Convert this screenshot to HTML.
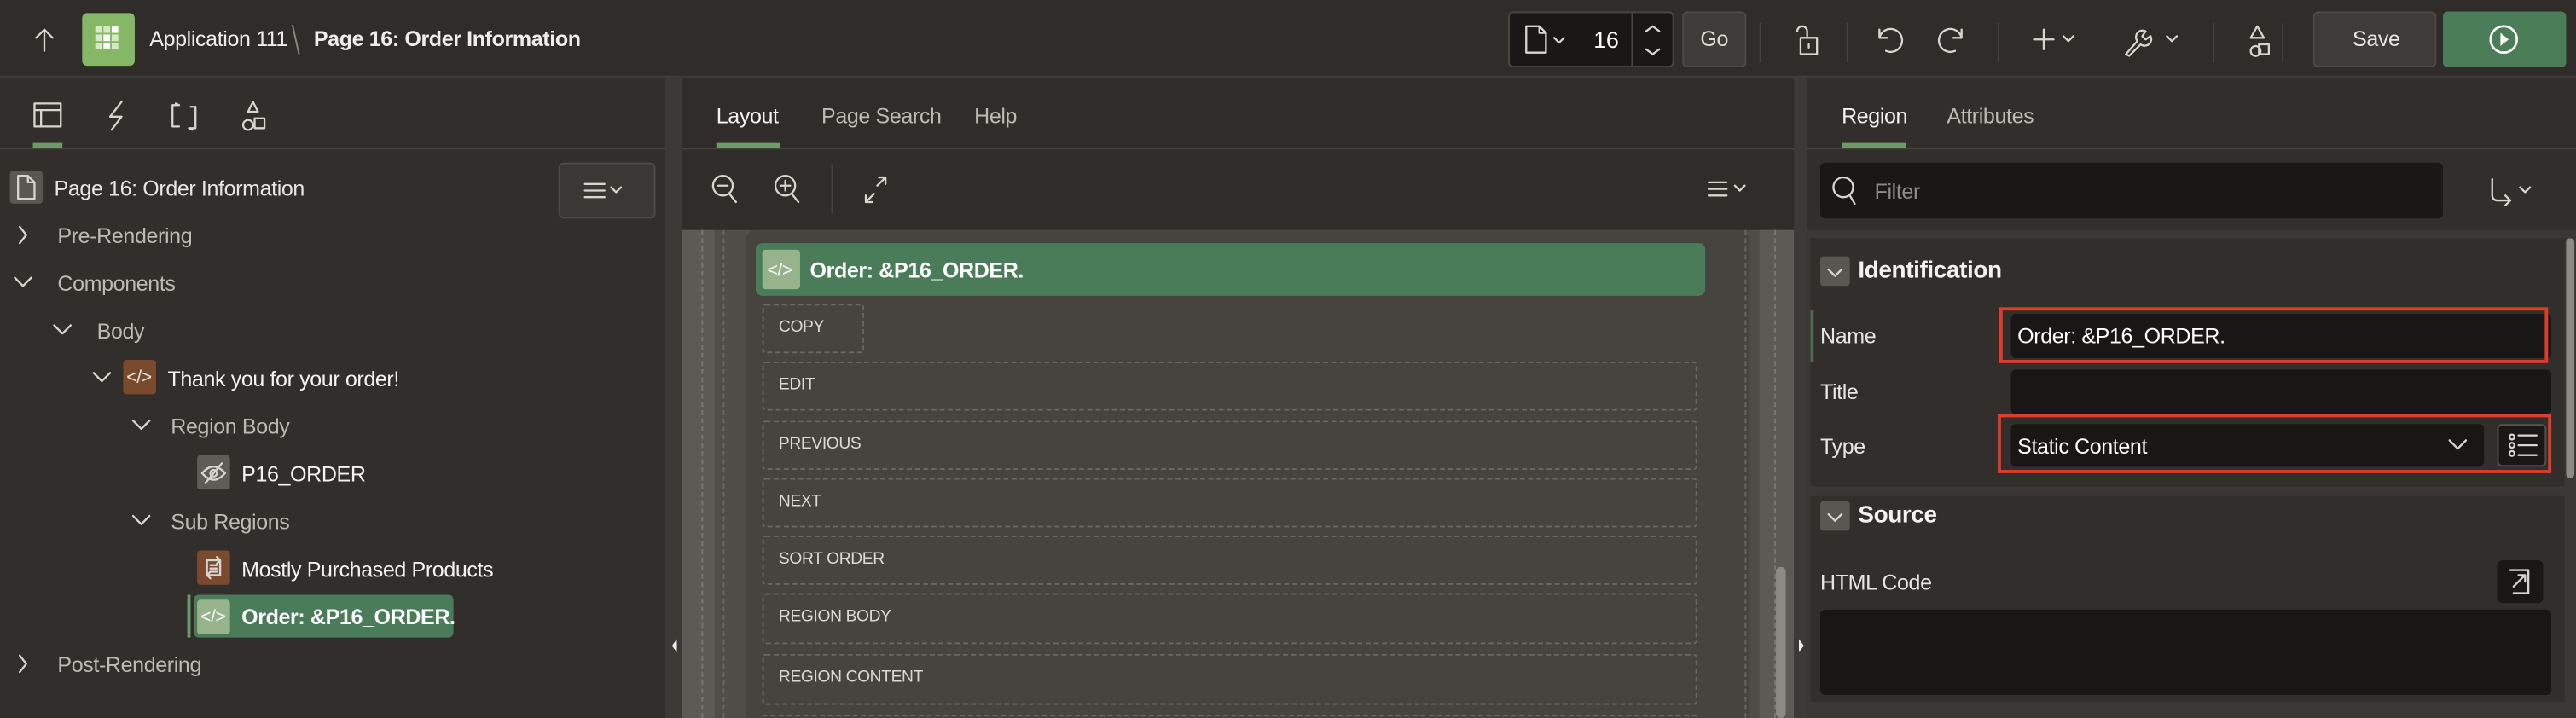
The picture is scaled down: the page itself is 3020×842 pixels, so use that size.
<!DOCTYPE html>
<html><head><meta charset="utf-8"><style>
*{box-sizing:border-box;margin:0;padding:0}
html,body{width:3020px;height:842px;overflow:hidden;background:#312e2b}
#r{position:absolute;left:0;top:0;width:1568px;height:437px;overflow:hidden;transform:scale(1.92602,1.92677);transform-origin:0 0;font-family:"Liberation Sans",sans-serif;color:#e8e6e3;font-size:13px;background:#312e2b;letter-spacing:-0.2px}
.a{position:absolute}
.t{position:absolute;white-space:nowrap;line-height:16px}
svg{position:absolute;overflow:visible}
.ic{stroke:#d8d5d0;fill:none;stroke-width:1.2;stroke-linecap:round;stroke-linejoin:round}
.btn{position:absolute;border:1px dashed #6a6661;border-radius:2px;font-size:10px;color:#dcd9d4;padding-left:9px;line-height:28px}
.lbl{font-size:13px;color:#e8e6e3}
</style></head><body><div id="r">
<div class="a" style="left:0;top:0;width:1568px;height:48px;background:#2f2c29;border-bottom:2px solid #3d3a37"></div>
<svg style="left:20px;top:16px" width="14" height="16"><path class="ic" d="M7 15V2M2 7l5-5 5 5"/></svg>
<div class="a" style="left:50px;top:8px;width:32px;height:32px;background:#86b766;border-radius:3px"></div>
<svg style="left:57px;top:15px" width="18" height="18"><g fill="#d6e8c8"><rect x="1" y="1" width="4" height="4"/><rect x="6" y="1" width="4" height="4"/><rect x="11" y="1" width="4" height="4" fill="#fff"/><rect x="1" y="6" width="4" height="4"/><rect x="6" y="6" width="4" height="4" fill="#fff"/><rect x="11" y="6" width="4" height="4"/><rect x="1" y="11" width="4" height="4"/><rect x="6" y="11" width="4" height="4" fill="#fff"/><rect x="11" y="11" width="4" height="4"/></g></svg>
<div class="t" style="left:91px;top:16px;font-size:13px;color:#f0eeeb">Application 111</div>
<svg style="left:177px;top:14px" width="6" height="20"><path d="M1 1l4 18" stroke="#8a8681" stroke-width="1"/></svg>
<div class="t" style="left:191px;top:16px;font-size:13px;font-weight:bold;color:#f0eeeb">Page 16: Order Information</div>

<div class="a" style="left:918px;top:7px;width:101px;height:34px;background:#1a1817;border:1px solid #4a4643;border-radius:3px"></div>
<div class="a" style="left:993px;top:8px;width:1px;height:32px;background:#4a4643"></div>
<svg style="left:928px;top:15px" width="30" height="18"><path class="ic" d="M1 1h8l4 4v12H1z M9 1v4h4 M18 8l3 3 3-3"/></svg>
<div class="t" style="left:970px;top:16px;font-size:14px;color:#fff">16</div>
<svg style="left:1000px;top:13px" width="12" height="22"><path class="ic" d="M2 6l4-3 4 3 M2 17l4 3 4-3" stroke="#aaa"/></svg>
<div class="a" style="left:1024px;top:7px;width:39px;height:34px;background:#3e3b38;border:1px solid #4e4a47;border-radius:3px"></div>
<div class="t" style="left:1035px;top:16px;font-size:13px;color:#e0ddd8">Go</div>
<div class="a" style="left:1071px;top:14px;width:1px;height:24px;background:#45413e"></div>
<svg style="left:1093px;top:14px" width="16" height="20"><path class="ic" d="M1 5a3 3 0 0 1 6 0v3 M3 9h10v10H3z M8 13v2"/></svg>
<div class="a" style="left:1124px;top:14px;width:1px;height:24px;background:#45413e"></div>
<svg style="left:1141px;top:15px" width="18" height="18"><path class="ic" d="M3 3v5h5 M3 8a7 7 0 1 1 4 8"/></svg>
<svg style="left:1179px;top:15px" width="18" height="18"><path class="ic" stroke="#6e6a66" d="M15 3v5h-5 M15 8a7 7 0 1 0-4 8"/></svg>
<div class="a" style="left:1216px;top:14px;width:1px;height:24px;background:#45413e"></div>
<svg style="left:1237px;top:17px" width="30" height="14"><path class="ic" d="M7 1v12M1 7h12 M19 5l3 3 3-3"/></svg>
<svg style="left:1292px;top:15px" width="36" height="20"><path class="ic" d="M2 18l7-8a4 4 0 0 1 5-6l-2 3 2 2 3-2a4 4 0 0 1-6 5l-7 7z M27 7l3 3 3-3"/></svg>
<div class="a" style="left:1347px;top:14px;width:1px;height:24px;background:#45413e"></div>
<svg style="left:1365px;top:15px" width="18" height="20"><path class="ic" d="M9 1l4 7H5z M5 16a3 3 0 1 1 0 .1 M10 12h6v6h-6z"/></svg>
<div class="a" style="left:1389px;top:14px;width:1px;height:24px;background:#45413e"></div>
<div class="a" style="left:1408px;top:7px;width:75px;height:34px;background:#3e3b38;border:1px solid #4e4a47;border-radius:3px"></div>
<div class="t" style="left:1432px;top:16px;font-size:13px;color:#e8e6e3">Save</div>
<div class="a" style="left:1487px;top:7px;width:75px;height:34px;background:#4a7d58;border-radius:3px"></div>
<svg style="left:1514px;top:14px" width="20" height="20"><circle cx="10" cy="10" r="8" stroke="#fff" stroke-width="1.4" fill="none"/><path d="M8 6l5 4-5 4z" fill="#fff"/></svg>

<div class="a" style="left:0;top:90px;width:405px;height:1px;background:#45413e"></div>
<svg style="left:20px;top:62px" width="18" height="16"><path class="ic" stroke="#fff" d="M1 1h16v14H1z M1 5h16 M5 5v10"/></svg>
<div class="a" style="left:20px;top:87px;width:18px;height:3px;background:#6c9a68"></div>
<svg style="left:64px;top:61px" width="14" height="19"><path class="ic" d="M10 1L3 10h7L4 18"/></svg>
<svg style="left:103px;top:62px" width="18" height="18"><path class="ic" d="M5 2H2v13h4 M6 2l-2-1 M13 3h3v13h-4 M12 16l2 1"/></svg>
<svg style="left:144px;top:61px" width="20" height="19"><path class="ic" d="M10 1l3 6H7z M4 15a3 3 0 1 1 0 .1 M11 11h6v6h-6z"/></svg>

<div class="a" style="left:6px;top:104px;width:20px;height:20px;background:#5a5652;border-radius:2px"></div>
<svg style="left:10px;top:106px" width="12" height="16"><path class="ic" d="M1 1h6l4 4v10H1z M7 1v4h4"/></svg>
<div class="t" style="left:33px;top:107px">Page 16: Order Information</div>
<div class="a" style="left:340px;top:99px;width:59px;height:34px;background:#3a3734;border:1px solid #4e4a47;border-radius:3px"></div>
<svg style="left:355px;top:111px" width="30" height="12"><path class="ic" d="M1 1h12M1 5h12M1 9h12 M17 3l3 3 3-3"/></svg>

<svg style="left:10px;top:137px" width="8" height="12"><path class="ic" stroke="#8a8681" d="M2 1l4 5-4 5"/></svg>
<div class="t" style="left:35px;top:136px;color:#bdb9b4">Pre-Rendering</div>
<svg style="left:8px;top:168px" width="12" height="8"><path class="ic" stroke="#8a8681" d="M1 1l5 5 5-5"/></svg>
<div class="t" style="left:35px;top:165px;color:#bdb9b4">Components</div>
<svg style="left:32px;top:197px" width="12" height="8"><path class="ic" stroke="#8a8681" d="M1 1l5 5 5-5"/></svg>
<div class="t" style="left:59px;top:194px;color:#bdb9b4">Body</div>
<svg style="left:56px;top:226px" width="12" height="8"><path class="ic" stroke="#8a8681" d="M1 1l5 5 5-5"/></svg>
<div class="a" style="left:75px;top:219px;width:20px;height:21px;background:#7a4a2e;border-radius:2px"></div>
<div class="t" style="left:77px;top:222px;font-size:11px;color:#f2e6dc">&lt;/&gt;</div>
<div class="t" style="left:102px;top:223px;color:#f5f3f0">Thank you for your order!</div>
<svg style="left:80px;top:255px" width="12" height="8"><path class="ic" stroke="#8a8681" d="M1 1l5 5 5-5"/></svg>
<div class="t" style="left:104px;top:252px;color:#bdb9b4">Region Body</div>
<div class="a" style="left:120px;top:277px;width:20px;height:21px;background:#5f5b57;border-radius:2px"></div>
<svg style="left:122px;top:281px" width="16" height="14"><path class="ic" d="M1 7q7-8 14 0q-7 8-14 0z M13 1L3 13"/><circle cx="8" cy="7" r="2" class="ic"/></svg>
<div class="t" style="left:147px;top:281px;color:#f5f3f0">P16_ORDER</div>
<svg style="left:80px;top:313px" width="12" height="8"><path class="ic" stroke="#8a8681" d="M1 1l5 5 5-5"/></svg>
<div class="t" style="left:104px;top:310px;color:#bdb9b4">Sub Regions</div>
<div class="a" style="left:120px;top:335px;width:20px;height:21px;background:#7a4a2e;border-radius:2px"></div>
<svg style="left:123px;top:338px" width="14" height="15"><path class="ic" d="M3 3h8v9H3z M5 6h4M5 8h4M5 10h4 M9 1l2 2-2 2 M5 14l-2-2 2-2"/></svg>
<div class="t" style="left:147px;top:339px;color:#f5f3f0">Mostly Purchased Products</div>
<div class="a" style="left:114px;top:362px;width:2px;height:26px;background:#6c9a68"></div>
<div class="a" style="left:118px;top:362px;width:158px;height:26px;background:#4a7c59;border-radius:3px"></div>
<div class="a" style="left:120px;top:365px;width:20px;height:21px;background:#96b38b;border-radius:2px"></div>
<div class="t" style="left:122px;top:368px;font-size:11px;color:#fff">&lt;/&gt;</div>
<div class="t" style="left:147px;top:368px;color:#fff;font-weight:bold">Order: &amp;P16_ORDER.</div>
<svg style="left:10px;top:398px" width="8" height="12"><path class="ic" stroke="#8a8681" d="M2 1l4 5-4 5"/></svg>
<div class="t" style="left:35px;top:397px;color:#bdb9b4">Post-Rendering</div>

<div class="a" style="left:405px;top:48px;width:10px;height:389px;background:#3c3936"></div>
<svg style="left:408px;top:388px" width="5" height="10"><path d="M4 1L1 5l3 4z" fill="#eee"/></svg>

<div class="a" style="left:415px;top:48px;width:677px;height:92px;background:#2f2c29"></div>
<div class="t" style="left:436px;top:63px;color:#f5f3f0">Layout</div>
<div class="t" style="left:500px;top:63px;color:#bdb9b4">Page Search</div>
<div class="t" style="left:593px;top:63px;color:#bdb9b4">Help</div>
<div class="a" style="left:436px;top:87px;width:39px;height:3px;background:#6c9a68"></div>
<div class="a" style="left:415px;top:90px;width:677px;height:1px;background:#45413e"></div>
<svg style="left:433px;top:106px" width="18" height="20"><circle cx="7" cy="7" r="6" class="ic" stroke="#7a7672"/><path class="ic" stroke="#7a7672" d="M4 7h6 M11 12l4 5"/></svg>
<svg style="left:471px;top:106px" width="18" height="20"><circle cx="7" cy="7" r="6" class="ic"/><path class="ic" d="M4 7h6M7 4v6 M11 12l4 5"/></svg>
<div class="a" style="left:506px;top:100px;width:1px;height:30px;background:#45413e"></div>
<svg style="left:525px;top:107px" width="16" height="18"><path class="ic" d="M9 6l5-5 M10 1h4v4 M7 11l-5 5 M2 12v4h4"/></svg>
<svg style="left:1039px;top:110px" width="30" height="12"><path class="ic" d="M1 1h11M1 5h11M1 9h11 M17 3l3 3 3-3"/></svg>

<div class="a" style="left:415px;top:140px;width:677px;height:297px;background:#504c48"></div>
<div class="a" style="left:415px;top:140px;width:20px;height:297px;background:#5d5955"></div>
<div class="a" style="left:1071px;top:140px;width:21px;height:297px;background:#5d5955"></div>
<div class="a" style="left:427px;top:140px;width:0;height:297px;border-left:1px dashed #7a7672"></div>
<div class="a" style="left:1080px;top:140px;width:0;height:297px;border-left:1px dashed #7a7672"></div>
<div class="a" style="left:454px;top:140px;width:611px;height:297px;background:#47433f;border-radius:6px 6px 0 0"></div>
<div class="a" style="left:440px;top:140px;width:0;height:297px;border-left:1px dashed #6a6661"></div>
<div class="a" style="left:1062px;top:140px;width:0;height:297px;border-left:1px dashed #6a6661"></div>
<div class="a" style="left:1081px;top:345px;width:6px;height:92px;background:#8e8a86;border-radius:3px"></div>
<div class="a" style="left:460px;top:148px;width:578px;height:32px;background:#4a7c59;border-radius:4px"></div>
<div class="a" style="left:464px;top:152px;width:23px;height:24px;background:#96b38b;border-radius:2px"></div>
<div class="t" style="left:467px;top:157px;font-size:11px;color:#fff">&lt;/&gt;</div>
<div class="t" style="left:493px;top:157px;font-weight:bold;color:#fff">Order: &amp;P16_ORDER.</div>
<div class="btn" style="left:464px;top:185px;width:62px;height:30px">COPY</div>
<div class="btn" style="left:464px;top:220px;width:569px;height:30px">EDIT</div>
<div class="btn" style="left:464px;top:256px;width:569px;height:30px">PREVIOUS</div>
<div class="btn" style="left:464px;top:291px;width:569px;height:30px">NEXT</div>
<div class="btn" style="left:464px;top:326px;width:569px;height:30px">SORT ORDER</div>
<div class="btn" style="left:464px;top:361px;width:569px;height:31px">REGION BODY</div>
<div class="btn" style="left:464px;top:398px;width:569px;height:31px">REGION CONTENT</div>
<div class="a" style="left:464px;top:435px;width:569px;height:2px;border-top:1px dashed #6a6661"></div>

<div class="a" style="left:1092px;top:48px;width:8px;height:389px;background:#3c3936"></div>
<svg style="left:1094px;top:388px" width="5" height="10"><path d="M1 1l3 4-3 4z" fill="#eee"/></svg>

<div class="t" style="left:1121px;top:63px;color:#f5f3f0">Region</div>
<div class="t" style="left:1185px;top:63px;color:#bdb9b4">Attributes</div>
<div class="a" style="left:1121px;top:87px;width:39px;height:3px;background:#6c9a68"></div>
<div class="a" style="left:1100px;top:90px;width:468px;height:1px;background:#45413e"></div>
<div class="a" style="left:1108px;top:99px;width:379px;height:34px;background:#1a1817;border-radius:3px"></div>
<svg style="left:1115px;top:107px" width="18" height="20"><circle cx="7" cy="7" r="6" class="ic" stroke="#a09c97"/><path class="ic" stroke="#a09c97" d="M11 12l3 5"/></svg>
<div class="t" style="left:1141px;top:109px;color:#8e8a86">Filter</div>
<svg style="left:1515px;top:108px" width="26" height="18"><path class="ic" d="M2 1v10a3 3 0 0 0 3 3h7 M10 11l3 3-3 3 M19 6l3 3 3-3"/></svg>

<div class="a" style="left:1100px;top:140px;width:468px;height:297px;background:#3a3734"></div>
<div class="a" style="left:1102px;top:145px;width:459px;height:151px;background:#312e2b"></div>
<div class="a" style="left:1102px;top:302px;width:459px;height:125px;background:#312e2b"></div>
<div class="a" style="left:1562px;top:145px;width:5px;height:146px;background:#8e8a86;border-radius:3px"></div>
<div class="a" style="left:1108px;top:156px;width:18px;height:18px;background:#5a5652;border-radius:2px"></div>
<svg style="left:1112px;top:163px" width="10" height="6"><path class="ic" d="M1 1l4 4 4-4"/></svg>
<div class="t" style="left:1131px;top:157px;font-size:14.5px;font-weight:bold;color:#f5f3f0">Identification</div>
<div class="a" style="left:1102px;top:189px;width:2px;height:31px;background:#4a6b4d"></div>
<div class="t lbl" style="left:1108px;top:197px">Name</div>
<div class="a" style="left:1224px;top:191px;width:329px;height:27px;background:#181716;border-radius:3px"></div>
<div class="a" style="left:1217px;top:187px;width:334px;height:34px;border:2px solid #e03c2a"></div>
<div class="t" style="left:1228px;top:197px;color:#fff">Order: &amp;P16_ORDER.</div>
<div class="t lbl" style="left:1108px;top:231px">Title</div>
<div class="a" style="left:1224px;top:225px;width:329px;height:27px;background:#181716;border-radius:3px"></div>
<div class="t lbl" style="left:1108px;top:264px">Type</div>
<div class="a" style="left:1224px;top:258px;width:288px;height:26px;background:#181716;border-radius:3px"></div>
<div class="t" style="left:1228px;top:264px;color:#fff">Static Content</div>
<svg style="left:1490px;top:267px" width="12" height="8"><path class="ic" d="M1 1l5 5 5-5"/></svg>
<div class="a" style="left:1520px;top:258px;width:30px;height:26px;background:#1a1817;border:1px solid #55514d;border-radius:3px"></div>
<svg style="left:1527px;top:264px" width="18" height="15"><circle cx="2" cy="2" r="1.5" class="ic" stroke-width="0.9"/><circle cx="2" cy="7" r="1.5" class="ic" stroke-width="0.9"/><circle cx="2" cy="12" r="1.5" class="ic" stroke-width="0.9"/><path class="ic" d="M6 1h11M6 7h11M6 13h11"/></svg>
<div class="a" style="left:1216px;top:252px;width:337px;height:36px;border:2px solid #e03c2a"></div>

<div class="a" style="left:1108px;top:305px;width:18px;height:18px;background:#5a5652;border-radius:2px"></div>
<svg style="left:1112px;top:312px" width="10" height="6"><path class="ic" d="M1 1l4 4 4-4"/></svg>
<div class="t" style="left:1131px;top:306px;font-size:14.5px;font-weight:bold;color:#f5f3f0">Source</div>
<div class="t lbl" style="left:1108px;top:347px">HTML Code</div>
<div class="a" style="left:1520px;top:341px;width:28px;height:26px;background:#1a1817;border-radius:3px"></div>
<svg style="left:1527px;top:346px" width="14" height="16"><path class="ic" d="M1 1h11v14H3 M3 11l7-7 M6 4h4v4"/></svg>
<div class="a" style="left:1108px;top:371px;width:445px;height:52px;background:#181716;border-radius:3px"></div>
</div></body></html>
